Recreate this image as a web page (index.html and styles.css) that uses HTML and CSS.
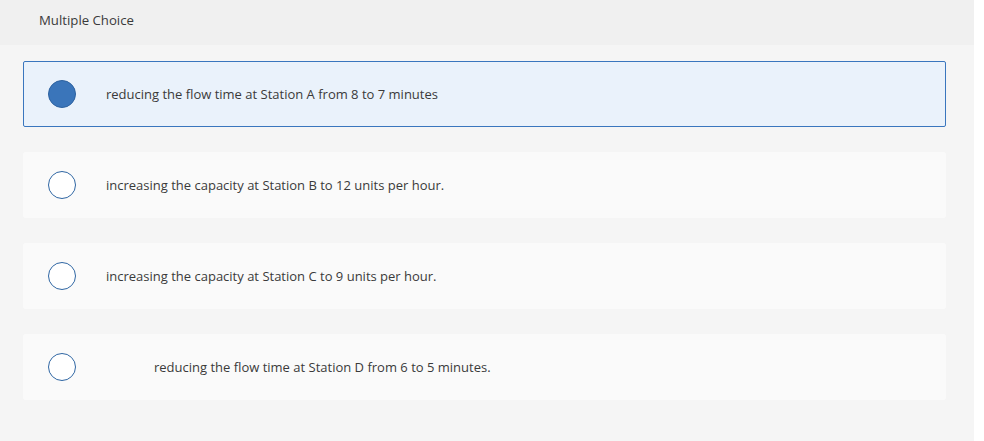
FILE: index.html
```html
<!DOCTYPE html>
<html>
<head>
<meta charset="utf-8">
<link rel="stylesheet" href="styles.css">
</head>
<body>
<div class="page">
  <div class="header"><span class="title">Multiple Choice</span></div>
  <div class="choices">
    <div class="choice selected">
      <span class="radio"></span>
      <span class="label">reducing the flow time at Station A from 8 to 7 minutes</span>
    </div>
    <div class="choice">
      <span class="radio"></span>
      <span class="label">increasing the capacity at Station B to 12 units per hour.</span>
    </div>
    <div class="choice">
      <span class="radio"></span>
      <span class="label">increasing the capacity at Station C to 9 units per hour.</span>
    </div>
    <div class="choice">
      <span class="radio"></span>
      <span class="label indent">reducing the flow time at Station D from 6 to 5 minutes.</span>
    </div>
  </div>
</div>
</body>
</html>
```

FILE: styles.css
```css
html, body {
  margin: 0;
  padding: 0;
  background: #ffffff;
}
body {
  font-family: "Open Sans", "Liberation Sans", sans-serif;
  color: #3a3a3a;
  width: 984px;
  height: 441px;
  overflow: hidden;
}
.page {
  width: 974px;
  height: 441px;
  background: #f5f5f5;
}
.header {
  height: 45px;
  background: #f0f0f0;
  display: flex;
  align-items: center;
  padding-left: 39px;
  box-sizing: border-box;
}
.title {
  font-size: 13.2px;
  color: #3a3a3a;
  margin-top: -5px;
}
.choices {
  display: flex;
  flex-direction: column;
  gap: 25px;
  padding: 16px 0 0 23px;
  width: 923px;
}
.choice {
  height: 66px;
  box-sizing: border-box;
  background: #fafafa;
  border: 1px solid #fafafa;
  border-radius: 2px;
  display: flex;
  align-items: center;
  padding-left: 24px;
}
.choice.selected {
  background: #eaf2fb;
  border-color: #3a76be;
}
.radio {
  width: 28px;
  height: 28px;
  box-sizing: border-box;
  border-radius: 50%;
  border: 1.5px solid #2f66a3;
  background: #ffffff;
  flex: none;
}
.selected .radio {
  background: #3a75ba;
  border-color: #2d62a0;
}
.label {
  font-size: 13px;
  margin-left: 30px;
  color: #3a3a3a;
}
.label.indent {
  margin-left: 78px;
}
```
